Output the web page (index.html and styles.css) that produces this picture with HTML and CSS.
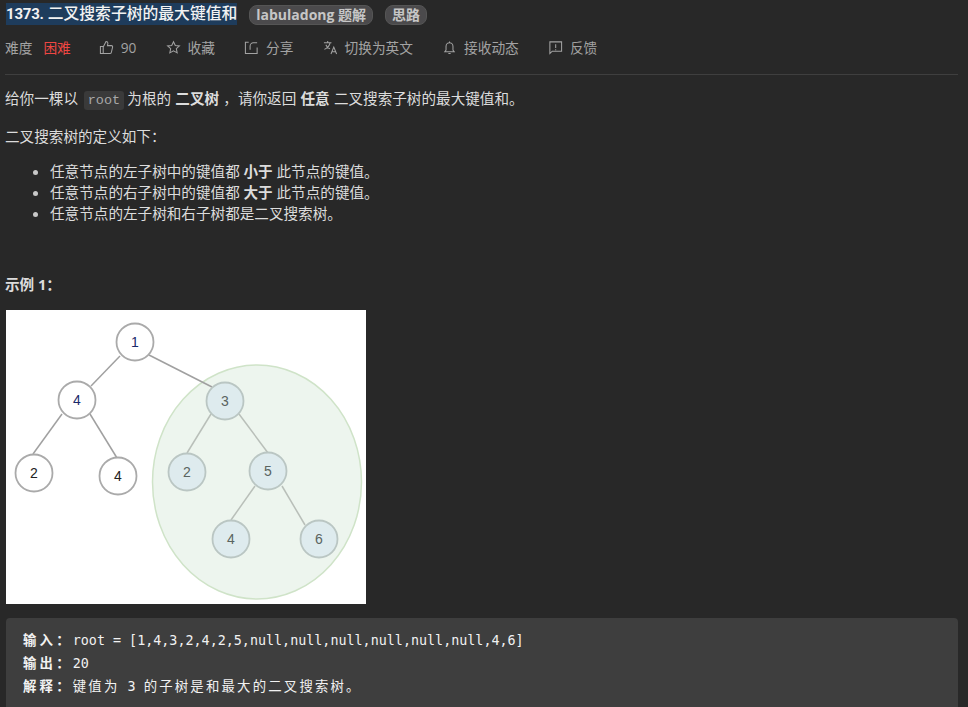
FILE: index.html
```html
<!DOCTYPE html>
<html lang="zh-CN">
<head>
    <meta charset="UTF-8">
    <meta name="viewport" content="width=device-width, initial-scale=1.0">
    <title>1373. 二叉搜索子树的最大键值和</title>
    <link rel="stylesheet" href="styles.css">
</head>
<body>
    <div class="title-row">
        <span class="title"><b>1373.</b> 二叉搜索子树的最大键值和</span>
        <span class="tag">labuladong 题解</span>
        <span class="tag">思路</span>
    </div>

    <div class="meta-row">
        <span class="meta-item difficulty">难度<span class="hard">困难</span></span>
        <span class="meta-item likes">
            <svg class="icon" viewBox="0 0 16 16"><path d="M1.500 7h3v7.500h-3zM4.500 7.500 7.500 1.500c1.300 0 2 .9 2 2L9 6h4.300c.9 0 1.400.8 1.200 1.600l-1.300 5.700c-.2.700-.7 1.200-1.500 1.200H4.500"/></svg>
            90
        </span>
        <span class="meta-item fav">
            <svg class="icon" viewBox="0 0 16 16"><path d="M8 1.800 9.900 5.800 14.300 6.300 11 9.300 11.900 13.700 8 11.500 4.100 13.700 5 9.300 1.700 6.300 6.100 5.800z"/></svg>
            收藏
        </span>
        <span class="meta-item share">
            <svg class="icon" viewBox="0 0 16 16"><path d="M5 2.500H1.500V14.500H14V8M6.500 10.500V6.500c0-2 1.500-3.500 3.500-3.500H14"/></svg>
            分享
        </span>
        <span class="meta-item lang">
            <svg class="icon" viewBox="0 0 16 16"><path d="M1 3h8M5 1v2M7.500 3C7 6 4.500 8.500 1.500 10M3 5c.8 2 2.500 3.500 4.500 4.500M8.500 15l3-7.500 3 7.500M9.500 12.500h4"/></svg>
            切换为英文
        </span>
        <span class="meta-item bell">
            <svg class="icon" viewBox="0 0 16 16"><path d="M3 12.500h10l-1.300-1.800V7c0-2.200-1.600-4-3.700-4S4.300 4.800 4.300 7v3.700zM8 1.500V3M6.800 14.500h2.400"/></svg>
            接收动态
        </span>
        <span class="meta-item">
            <svg class="icon" viewBox="0 0 16 16"><path d="M2 14.500V2h12.500v10H4.500zM8.200 4.500v4M8.200 9.800v1"/></svg>
            反馈
        </span>
    </div>

    <div class="content">
        <p class="intro">给你一棵以 <code>root</code> 为根的 <strong>二叉树</strong> ，请你返回 <strong>任意</strong> 二叉搜索子树的最大键值和。</p>
        <p class="define">二叉搜索树的定义如下：</p>
        <ul>
            <li>任意节点的左子树中的键值都 <strong>小于</strong> 此节点的键值。</li>
            <li>任意节点的右子树中的键值都 <strong>大于</strong> 此节点的键值。</li>
            <li>任意节点的左子树和右子树都是二叉搜索树。</li>
        </ul>
        <p class="example"><strong>示例 1：</strong></p>

        <svg class="tree" viewBox="0 0 360 294" width="360" height="294">
            <ellipse class="zone" cx="251" cy="172" rx="104.500" ry="117"/>
            <g class="edges">
                <line x1="114" y1="46" x2="85" y2="76"/>
                <line x1="143" y1="45" x2="206" y2="77"/>
                <line x1="56" y1="104" x2="27" y2="144"/>
                <line x1="84" y1="104" x2="111" y2="148"/>
            </g>
            <g class="edges edges-light">
                <line x1="205" y1="104" x2="181" y2="143"/>
                <line x1="233" y1="104" x2="262" y2="143"/>
                <line x1="249" y1="176" x2="225" y2="210"/>
                <line x1="276" y1="176" x2="299" y2="215"/>
            </g>
            <g class="node"><circle cx="129" cy="32" r="18.500"/><text x="129" y="37" class="blue">1</text></g>
            <g class="node"><circle cx="71" cy="90" r="18.500"/><text x="71" y="95" class="blue">4</text></g>
            <g class="node"><circle cx="28" cy="163" r="18.500"/><text x="28" y="168">2</text></g>
            <g class="node"><circle cx="112" cy="166" r="18.500"/><text x="112" y="171">4</text></g>
            <g class="node node-in"><circle cx="219" cy="91" r="18.500"/><text x="219" y="96">3</text></g>
            <g class="node node-in"><circle cx="181" cy="162" r="18.500"/><text x="181" y="167">2</text></g>
            <g class="node node-in"><circle cx="262" cy="161" r="18.500"/><text x="262" y="166">5</text></g>
            <g class="node node-in"><circle cx="225" cy="229" r="18.500"/><text x="225" y="234">4</text></g>
            <g class="node node-in"><circle cx="313" cy="229" r="18.500"/><text x="313" y="234">6</text></g>
        </svg>

        <pre><strong>输入：</strong>root = [1,4,3,2,4,2,5,null,null,null,null,null,null,4,6]
<strong>输出：</strong>20
<strong>解释：</strong><span class="cjk">键值为</span> 3 <span class="cjk">的子树是和最大的二叉搜索树。</span></pre>
    </div>
</body>
</html>
```

FILE: styles.css
```css
html, body {
    height: 707px;
    overflow: hidden;
}
body {
    margin: 0;
    padding: 0 10px 0 6px;
    background-color: #282828;
    color: #dcdcdc;
    font-family: "Open Sans", "Noto Sans CJK SC", sans-serif;
    font-size: 14.6px;
}
.title-row {
    display: flex;
    align-items: center;
    height: 27px;
}
.title {
    background: #1e3c5c;
    color: #f2f2f2;
    font-family: Roboto, "Noto Sans CJK SC", sans-serif;
    font-size: 15.800px;
    font-weight: 500;
    line-height: 21px;
    white-space: nowrap;
}
.title b {
    font-size: 15px;
    font-weight: 700;
    letter-spacing: -0.2px;
}
.tag {
    margin: 3px 0 0 12px;
    padding: 0 6px;
    height: 20px;
    line-height: 18px;
    border: 1px solid #555;
    border-radius: 8px;
    background: #4b4a4c;
    color: #c6c6c6;
    font-size: 14px;
    font-weight: 700;
    box-sizing: border-box;
    white-space: nowrap;
}
.meta-row {
    display: flex;
    align-items: center;
    height: 20px;
    margin-top: 10px;
    margin-left: -1px;
    padding-bottom: 17px;
    border-bottom: 1px solid #3f3f3f;
    color: #a3a3a3;
    font-size: 13.700px;
}
.meta-item {
    display: flex;
    align-items: center;
    gap: 7px;
    margin-right: 29.100px;
    white-space: nowrap;
}
.difficulty {
    gap: 11px;
    margin-right: 28px;
}
.hard {
    color: #ef4743;
}
.icon {
    width: 15px;
    height: 15px;
    fill: none;
    stroke: #a3a3a3;
    stroke-width: 1.100;
}
.content {
    margin-left: -1px;
}
.intro {
    margin: 13px 0 0;
    line-height: 21px;
    word-spacing: 0.4px;
}
.define {
    margin: 15px 0 0;
    line-height: 21px;
}
code {
    margin: 0 -1px 0 1.600px;
    padding: 2px 4px;
    border-radius: 3px;
    background: #3a3a3a;
    color: #a8a8a8;
    font-family: "Liberation Mono", monospace;
    font-size: 13.500px;
}
strong {
    font-weight: 700;
}
ul {
    margin: 14px 0 0;
    padding-left: 45px;
}
li {
    line-height: 21px;
}
li::marker {
    color: #c8c8c8;
}
.example {
    margin: 50px 0 0;
    line-height: 21px;
}
.tree {
    display: block;
    margin: 15px 0 0 1px;
    background: #fff;
}
.zone {
    fill: #edf5ee;
    stroke: #cfe3c8;
    stroke-width: 1.500;
}
.edges line {
    stroke: #a0a0a0;
    stroke-width: 1.500;
}
.edges-light line {
    stroke: #b9bfb9;
}
.node circle {
    fill: #fff;
    stroke: #aaa;
    stroke-width: 1.800;
}
.node text {
    fill: #222;
    font-family: "Liberation Sans", sans-serif;
    font-size: 14px;
    text-anchor: middle;
}
.node text.blue {
    fill: #1a2a6a;
}
.node-in circle {
    fill: #deebee;
    stroke: #bac6c3;
}
.node-in text {
    fill: #5a6460;
}
pre {
    margin: 14px 0 0 1px;
    padding: 11px 17px;
    height: 100px;
    border-radius: 4px;
    background: #3e3e3e;
    color: #f2f2f2;
    font-family: "DejaVu Sans Mono", "Noto Sans CJK SC", monospace;
    font-size: 13.380px;
    line-height: 23px;
    overflow: hidden;
}
pre strong {
    letter-spacing: 3.200px;
}
.cjk {
    letter-spacing: 2.200px;
}
```
